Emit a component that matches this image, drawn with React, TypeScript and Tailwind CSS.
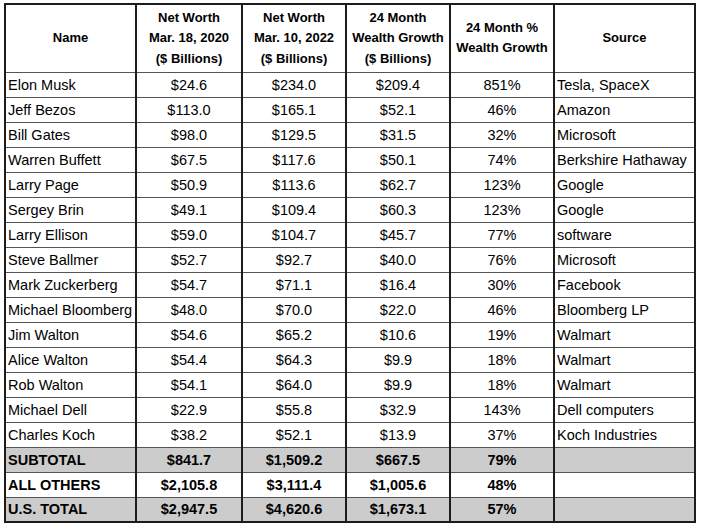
import React from "react";

const rows: [string, string, string, string, string, string][] = [
  ["Elon Musk", "$24.6", "$234.0", "$209.4", "851%", "Tesla, SpaceX"],
  ["Jeff Bezos", "$113.0", "$165.1", "$52.1", "46%", "Amazon"],
  ["Bill Gates", "$98.0", "$129.5", "$31.5", "32%", "Microsoft"],
  ["Warren Buffett", "$67.5", "$117.6", "$50.1", "74%", "Berkshire Hathaway"],
  ["Larry Page", "$50.9", "$113.6", "$62.7", "123%", "Google"],
  ["Sergey Brin", "$49.1", "$109.4", "$60.3", "123%", "Google"],
  ["Larry Ellison", "$59.0", "$104.7", "$45.7", "77%", "software"],
  ["Steve Ballmer", "$52.7", "$92.7", "$40.0", "76%", "Microsoft"],
  ["Mark Zuckerberg", "$54.7", "$71.1", "$16.4", "30%", "Facebook"],
  ["Michael Bloomberg", "$48.0", "$70.0", "$22.0", "46%", "Bloomberg LP"],
  ["Jim Walton", "$54.6", "$65.2", "$10.6", "19%", "Walmart"],
  ["Alice Walton", "$54.4", "$64.3", "$9.9", "18%", "Walmart"],
  ["Rob Walton", "$54.1", "$64.0", "$9.9", "18%", "Walmart"],
  ["Michael Dell", "$22.9", "$55.8", "$32.9", "143%", "Dell computers"],
  ["Charles Koch", "$38.2", "$52.1", "$13.9", "37%", "Koch Industries"],
];

const totals: [string, string, string, string, string, boolean][] = [
  ["SUBTOTAL", "$841.7", "$1,509.2", "$667.5", "79%", true],
  ["ALL OTHERS", "$2,105.8", "$3,111.4", "$1,005.6", "48%", false],
  ["U.S. TOTAL", "$2,947.5", "$4,620.6", "$1,673.1", "57%", true],
];

const cell =
  "border-x-2 border-x-[#1c1c1c] border-y border-y-[#555555] px-[2px] p-0 whitespace-nowrap overflow-hidden";

export default function App() {
  return (
    <div className="bg-white w-[702px] h-[530px] pt-[3px] pl-[4px] font-['Liberation_Sans',Arial,sans-serif] text-black">
      <table className="table-fixed border-collapse border-2 border-[#1c1c1c] w-[692px]">
        <colgroup>
          <col className="w-[131px]" />
          <col className="w-[106px]" />
          <col className="w-[104px]" />
          <col className="w-[104px]" />
          <col className="w-[104px]" />
          <col className="w-[141px]" />
        </colgroup>
        <thead>
          <tr className="h-[68px] text-[13px] leading-[20.5px] font-bold text-center">
            <th className={cell}>Name</th>
            <th className={cell}>
              Net Worth<br />Mar. 18, 2020<br />($ Billions)
            </th>
            <th className={cell}>
              Net Worth<br />Mar. 10, 2022<br />($ Billions)
            </th>
            <th className={cell}>
              24 Month<br />Wealth Growth<br />($ Billions)
            </th>
            <th className={cell}>
              24 Month %<br />Wealth Growth
            </th>
            <th className={cell}>Source</th>
          </tr>
        </thead>
        <tbody className="text-[14.5px] leading-[18px]">
          {rows.map((r) => (
            <tr key={r[0]} className="h-[25px]">
              <td className={`${cell} text-left`}>{r[0]}</td>
              <td className={`${cell} text-center`}>{r[1]}</td>
              <td className={`${cell} text-center`}>{r[2]}</td>
              <td className={`${cell} text-center`}>{r[3]}</td>
              <td className={`${cell} text-center`}>{r[4]}</td>
              <td className={`${cell} text-left`}>{r[5]}</td>
            </tr>
          ))}
          {totals.map((r) => (
            <tr key={r[0]} className={`h-[25px] font-bold ${r[5] ? "bg-[#cccccc]" : "bg-white"}`}>
              <td className={`${cell} text-left`}>{r[0]}</td>
              <td className={`${cell} text-center`}>{r[1]}</td>
              <td className={`${cell} text-center`}>{r[2]}</td>
              <td className={`${cell} text-center`}>{r[3]}</td>
              <td className={`${cell} text-center`}>{r[4]}</td>
              <td className={cell}></td>
            </tr>
          ))}
        </tbody>
      </table>
    </div>
  );
}
